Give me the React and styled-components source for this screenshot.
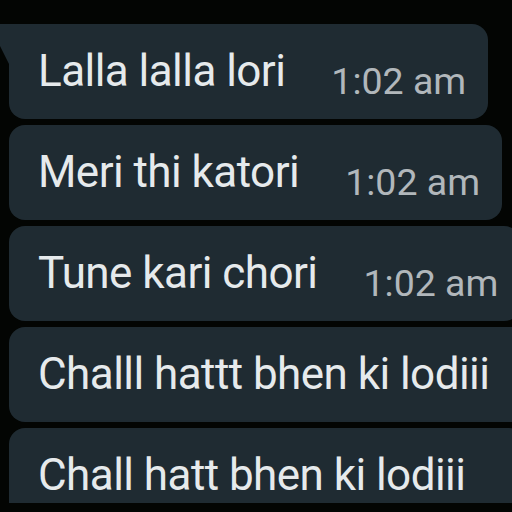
import React from "react";
import styled, { createGlobalStyle } from "styled-components";

const GlobalStyle = createGlobalStyle`
  html, body {
    margin: 0;
    padding: 0;
    background: #030503;
  }
  body {
    font-family: Roboto, "Noto Sans", "Liberation Sans", sans-serif;
    overflow: hidden;
  }
`;

// the last two timestamps sit past the right edge of the shot, so they're left out
const messages = [
  { text: "Lalla lalla lori", time: "1:02 am", tail: true },
  { text: "Meri thi katori", time: "1:02 am" },
  { text: "Tune kari chori", time: "1:02 am" },
  { text: "Challl hattt bhen ki lodiii" },
  { text: "Chall hatt bhen ki lodiii" },
];

const Screen = styled.div`
  width: 512px;
  height: 503px;
  overflow: hidden;
  padding-top: 24px;
  box-sizing: border-box;
  display: flex;
  flex-direction: column;
  gap: 6px;
`;

const Bubble = styled.div`
  position: relative;
  align-self: flex-start;
  margin-left: 9px;
  height: 95px;
  box-sizing: border-box;
  padding: 0 ${(p) => (p.$open ? "60px" : "22px")} 0 29px;
  background: #1f2b32;
  border-radius: ${(p) => (p.$tail ? "0 16px 16px 16px" : "16px")};
  white-space: nowrap;
  line-height: 95px;

  ${(p) =>
    p.$tail &&
    `
    &::before {
      content: "";
      position: absolute;
      left: -10px;
      top: 0;
      width: 10px;
      height: 40px;
      background: #1f2b32;
      clip-path: polygon(0 0, 100% 0, 100% 100%, 0 50%);
    }
  `}
`;

const Text = styled.span`
  font-size: 44px;
  letter-spacing: -0.55px;
  color: #e6eaec;
  vertical-align: -4px;
`;

const Time = styled.span`
  margin-left: 46px;
  font-size: 37.5px;
  color: #b1b7bb;
  vertical-align: -12px;
`;

export default function App() {
  return (
    <>
      <GlobalStyle />
      <Screen>
        {messages.map((m, i) => (
          <Bubble key={i} $tail={m.tail} $open={!m.time}>
            <Text>{m.text}</Text>
            {m.time && <Time>{m.time}</Time>}
          </Bubble>
        ))}
      </Screen>
    </>
  );
}
